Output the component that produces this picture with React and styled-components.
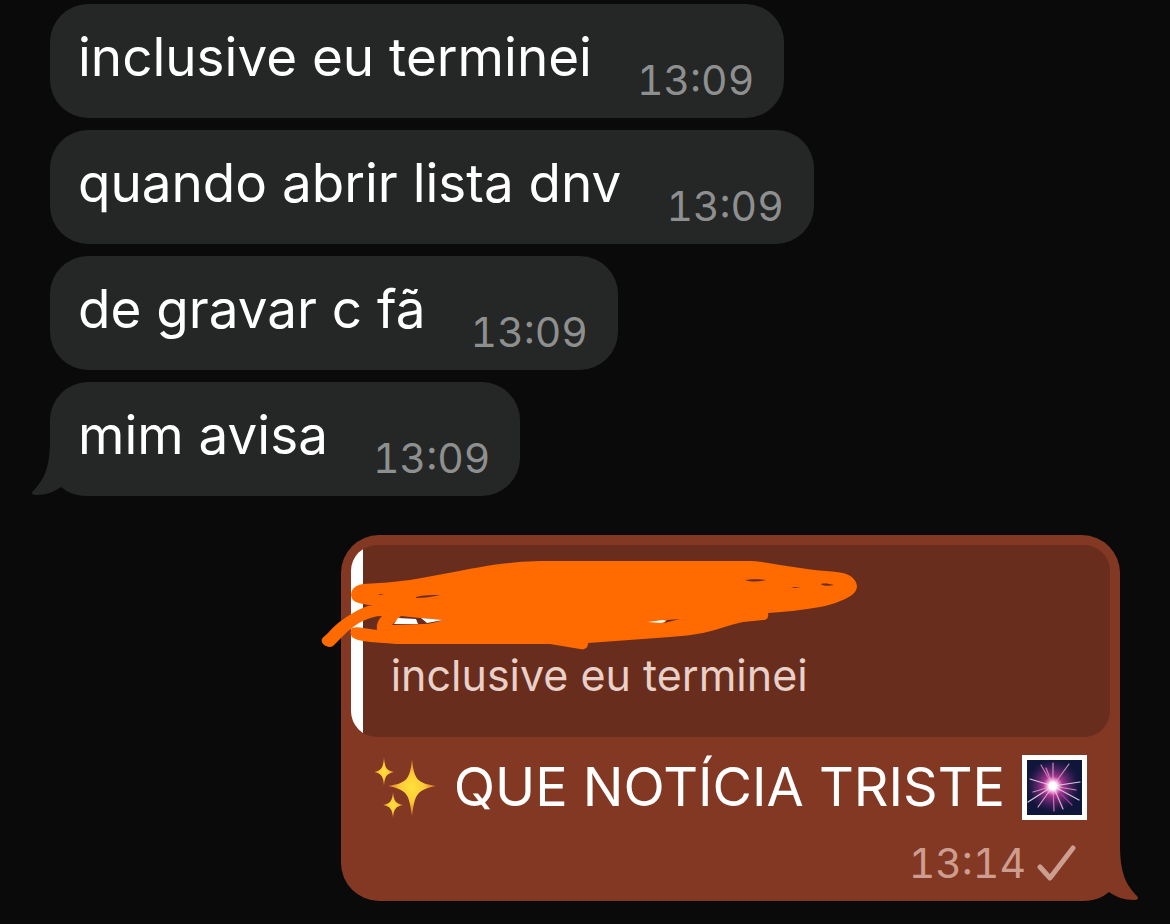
import React from 'react'
import styled, { createGlobalStyle, css } from 'styled-components'

const GlobalStyle = createGlobalStyle`
    :root {
        --color-page: #0a0a0a;
        --color-incoming: #252626;
        --color-outgoing: #833823;
        --color-quote: #682d1d;
        --color-marker: #ff6b00;
    }

    body {
        margin: 0;
        background-color: var(--color-page);
        font-family: Inter, "Liberation Sans", sans-serif;
    }
`

const Chat = styled.main`
    display: flex;
    flex-direction: column;
    align-items: flex-start;
    gap: 12px;
    padding: 4px 50px 23px;
    background-color: var(--color-page);
`

const Bubble = styled.article`
    position: relative;
    isolation: isolate;
    box-sizing: border-box;
    max-width: 100%;
    border-radius: 38px;
    color: #fff;
    background-color: var(--color-incoming);
`

const Incoming = styled(Bubble)`
    display: flex;
    gap: 45px;
    padding: 19px 30px 13px 28px;
`

const Outgoing = styled(Bubble)`
    align-self: flex-end;
    margin-top: 27px;
    padding: 10px 10px 13px;
    background-color: var(--color-outgoing);
`

const Text = styled.p`
    margin: 0;
    font-size: ${props => props.$large ? 54 : 53}px;
    line-height: 68px;
    white-space: nowrap;
`

const IncomingText = styled(Text)`
    padding-bottom: 14px;
`

const Time = styled.time`
    align-self: flex-end;
    font-size: 41px;
    line-height: 50px;
    font-variant-numeric: tabular-nums;
    color: ${props => props.$sent ? '#cd9e90' : '#8e8f8f'};
`

const Quote = styled.blockquote`
    position: relative;
    margin: 0;
    padding: 102px 40px 34px;
    border-radius: 26px;
    background: linear-gradient(to right, #fff 12px, var(--color-quote) 12px);
    color: #e9d0c8;
    font-size: 43px;
    line-height: 56px;
`

const Line = styled.div`
    display: flex;
    align-items: center;
    gap: 17px;
    padding: 16px 23px 0 24px;
`

const Status = styled.div`
    display: flex;
    justify-content: flex-end;
    align-items: center;
    gap: 10px;
    padding: 17px 34px 0 0;
`

const overlay = css`
    position: absolute;
    display: block;
`

const Marker = styled.svg`
    ${overlay}
    left: -31px;
    top: 10px;
`

const Tail = styled.svg`
    ${overlay}
    z-index: -1;
    bottom: 0;
    ${props => props.$right ? 'right: -20px; transform: scaleX(-1);' : 'left: -20px;'}
    fill: ${props => props.$right ? 'var(--color-outgoing)' : 'var(--color-incoming)'};
`

const Icon = styled.svg`
    display: block;
    flex: none;
`

const BubbleTail = ({ right }) => (
    <Tail $right={right} width="60" height="56" viewBox="0 0 60 56" aria-hidden="true">
        <path d="M20 0C20 28 14 40 3 51Q0 55 6 55C16 55 24 52 31 47C38 53 46 56 60 56V0Z" />
    </Tail>
)

const Scribble = () => (
    <Marker width="540" height="100" viewBox="320 555 540 100" aria-hidden="true">
        <path
            fill="var(--color-marker)"
            d="M351 594C352 588 356 585 363 584C380 583 395 582 410 580C422 578 432 576 443 574C470 569 488 565 510 563C527 561 542 561 560 561H747C760 561 770 563 780 565L807 569C820 571 832 571 843 573C852 575 857 581 857 587C856 592 853 595 847 598C839 602 831 605 820 607C803 610 786 612 768 613C769 617 767 620 763 620C756 621 750 621 743 622C729 625 717 630 703 633C693 635 682 636 670 637C643 639 616 641 588 643C588 648 585 650 580 649L550 644H397L370 642C362 641 356 640 352 637C350 634 350 631 352 628C355 627 359 627 363 628L377 630C376 624 379 619 382 616C375 616 369 618 363 621C356 624 349 630 343 636L333 646C328 649 320 644 322 639C323 637 326 635 328 633C336 624 344 618 353 613C359 609 366 606 373 605C364 605 358 603 354 601C352 599 351 597 351 594Z"
        />
        <path fill="var(--color-quote)" d="M401 616L420 618L443 620C437 622 430 624 423 624L392 625C395 622 398 619 401 616Z" />
        <path fill="#fff" d="M398 618L416 619L418 624H394ZM421 618L443 620L427 623Z" />
        <path fill="var(--color-quote)" d="M380 594L384 595L378 595ZM416 597C424 595 432 595 440 595C432 597 424 598 416 598ZM745 580C751 579 759 579 766 580C759 582 751 582 745 580ZM821 584C825 583 830 584 834 585C830 586 825 586 822 585ZM791 587L801 587L795 588Z" />
        <path fill="#fff" d="M648 622L663 620L667 621L661 623Z" />
        <path fill="var(--color-quote)" d="M667 620L680 619L664 623Z" />
    </Marker>
)

const Sparkles = () => (
    <Icon width="62" height="62" viewBox="0 0 62 62" role="img" aria-label="sparkles">
        <defs>
            <radialGradient id="spark">
                <stop offset="0" stopColor="#ffe13a" />
                <stop offset="0.5" stopColor="#fccb38" />
                <stop offset="1" stopColor="#d9702a" />
            </radialGradient>
        </defs>
        <g fill="url(#spark)">
            <path d="M37 3C39 22 41 27 61 30C41 34 40 39 37 60C34 39 33 34 13 30C33 27 35 22 37 3Z" />
            <path d="M9 1C10 12 11 14 19 16C11 18 10 20 9 30C8 20 7 18 -1 16C7 14 8 12 9 1Z" />
            <path d="M18 36C19 45 20 47 28 49C20 51 19 53 18 62C17 53 16 51 8 49C16 47 17 45 18 36Z" />
        </g>
    </Icon>
)

const rays = [
    [31, 8, '#c890b8'], [47, 9, '#c890b8'], [58, 27, '#d8c8e0'], [57, 45, '#d8c0d8'],
    [41, 54, '#e8a8d4'], [32, 56, '#d070b8'], [16, 52, '#d8a0cc'], [6, 47, '#e0c8e0'],
    [8, 24, '#d8c8e0'], [19, 10, '#c878b4'], [11, 37, '#c890b8'], [54, 35, '#c890b8'],
    [24, 13, '#dc78c0'], [50, 50, '#9c3c98']
]

const Firework = () => (
    <Icon width="65" height="65" viewBox="0 0 65 65" role="img" aria-label="fireworks">
        <defs>
            <radialGradient id="glow">
                <stop offset="0" stopColor="#ff9ce0" />
                <stop offset="0.35" stopColor="#d440a8" stopOpacity="0.8" />
                <stop offset="0.7" stopColor="#7a2c80" stopOpacity="0.45" />
                <stop offset="1" stopColor="#3a1c58" stopOpacity="0" />
            </radialGradient>
            <radialGradient id="core">
                <stop offset="0" stopColor="#fff" />
                <stop offset="0.35" stopColor="#fff" />
                <stop offset="1" stopColor="#ff9ce0" stopOpacity="0" />
            </radialGradient>
        </defs>
        <rect width="65" height="65" fill="#fff" />
        <rect x="5" y="5" width="55" height="55" fill="#10163a" />
        <circle cx="31" cy="31" r="27" fill="url(#glow)" />
        {rays.map(([x, y, color]) => (
            <line key={`${x}-${y}`} x1="31" y1="31" x2={x} y2={y} stroke={color} strokeWidth="1.2" strokeLinecap="round" />
        ))}
        <circle cx="31" cy="31" r="10" fill="url(#core)" />
    </Icon>
)

const Check = () => (
    <Icon width="40" height="36" viewBox="0 0 40 36" role="img" aria-label="sent">
        <path d="M4 22L14 33L37 3" fill="none" stroke="#cd9e90" strokeWidth="5" strokeLinecap="round" strokeLinejoin="round" />
    </Icon>
)

const messages = ['inclusive eu terminei', 'quando abrir lista dnv', 'de gravar c fã', 'mim avisa']

const App = () => (
    <>
        <GlobalStyle />
        <Chat>
            {messages.map((message, i) => (
                <Incoming key={message}>
                    <IncomingText>{message}</IncomingText>
                    <Time>13:09</Time>
                    {i === messages.length - 1 && <BubbleTail />}
                </Incoming>
            ))}
            <Outgoing>
                <Quote>
                    inclusive eu terminei
                    <Scribble />
                </Quote>
                <Line>
                    <Sparkles />
                    <Text $large>QUE NOTÍCIA TRISTE</Text>
                    <Firework />
                </Line>
                <Status>
                    <Time $sent>13:14</Time>
                    <Check />
                </Status>
                <BubbleTail right />
            </Outgoing>
        </Chat>
    </>
)

export default App
